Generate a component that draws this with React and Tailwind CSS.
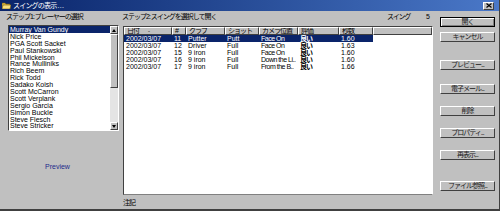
import React from "react";

const players = [
  "Murray Van Gundy",
  "Nick Price",
  "PGA Scott Sacket",
  "Paul Stankowski",
  "Phil Mickelson",
  "Rance Mulliniks",
  "Rich Beem",
  "Rick Todd",
  "Sadako Koish",
  "Scott McCarron",
  "Scott Verplank",
  "Sergio Garcia",
  "Simon Buckle",
  "Steve Flesch",
  "Steve Stricker",
];

const cols = [
  { label: "日付", w: "w-[48px]", sort: true },
  { label: "#", w: "w-[14px]" },
  { label: "クラブ", w: "w-[39px]" },
  { label: "ショット", w: "w-[34px]" },
  { label: "カメラ位置", w: "w-[39px]" },
  { label: "評価", w: "w-[41px]" },
  { label: "秒数", w: "w-[34px]" },
];

const rows = [
  ["2002/03/07", "11", "Putter", "Putt", "Face On", "良い", "1.60"],
  ["2002/03/07", "12", "Driver", "Full", "Face On", "良い", "1.63"],
  ["2002/03/07", "15", "9 iron", "Full", "Face On", "良い", "1.60"],
  ["2002/03/07", "16", "9 iron", "Full", "Down the Li..", "良い", "1.60"],
  ["2002/03/07", "17", "9 iron", "Full", "From the B..", "良い", "1.66"],
];

function Btn({ children, isDefault, className }) {
  return (
    <div
      className={
        "h-[10px] w-[55px] flex items-center justify-center bg-[#c0c0c0] text-[7px] leading-[8px] tracking-[-1px] text-[#1a1a1a] whitespace-nowrap " +
        (isDefault
          ? "border border-black shadow-[inset_1px_1px_0_#ffffff,inset_-1px_-1px_0_#808080] "
          : "border border-t-white border-l-white border-r-[#404040] border-b-[#404040] ") +
        (className || "")
      }
    >
      {children}
    </div>
  );
}

export default function App() {
  return (
    <div className="w-[500px] h-[211px] bg-[#c0c0c0] flex flex-col overflow-hidden border-r border-b-2 border-[#404040] font-['Liberation_Sans','Noto_Sans_CJK_JP',sans-serif] text-black">
      {/* Title bar */}
      <div className="h-[11px] shrink-0 flex items-center bg-linear-to-r from-[#0a246a] to-[#4a78c8] pl-[2px] pr-[5px]">
        <svg width="9" height="7" viewBox="0 0 9 7" className="shrink-0">
          <path d="M0 1 H3 L4 2 H8 V7 H0 Z" fill="#e8c040" stroke="#6a5010" strokeWidth="0.6" />
          <path d="M1 3 H9 L8 7 H0 Z" fill="#f8e080" stroke="#6a5010" strokeWidth="0.6" />
        </svg>
        <span className="ml-[2px] text-[7px] leading-[8px] text-white tracking-[-0.8px]">
          スイングの表示 . . .
        </span>
        <div className="ml-auto w-[11px] h-[8px] bg-[#c0c0c0] border border-t-white border-l-white border-r-[#404040] border-b-[#404040] flex items-center justify-center">
          <svg width="6" height="5" viewBox="0 0 6 5">
            <path d="M0.5 0.5 L5.5 4.5 M5.5 0.5 L0.5 4.5" stroke="#000" strokeWidth="1.2" />
          </svg>
        </div>
      </div>

      {/* Body */}
      <div className="flex flex-1 min-h-0">
        {/* Left column */}
        <div className="w-[119px] shrink-0 pl-[6px] pt-[2px] flex flex-col">
          <div className="h-[8px] leading-[8px] text-[7px] tracking-[-1px] whitespace-nowrap">
            ステップ1: プレーヤーの選択
          </div>
          <div className="mt-[4px] ml-[2px] w-[111px] h-[106px] bg-white border border-t-[#404040] border-l-[#404040] border-r-white border-b-white flex">
            <div className="flex-1 flex flex-col">
              {players.map((p, i) => (
                <div
                  key={p}
                  className={
                    "h-[6.9px] leading-[7px] text-[7px] pl-[1px] whitespace-nowrap " +
                    (i === 0 ? "bg-[#0a246a] text-white" : "")
                  }
                >
                  {p}
                </div>
              ))}
            </div>
            {/* Scrollbar */}
            <div className="w-[8px] shrink-0 flex flex-col bg-[#e4e4e4]">
              <div className="h-[8px] bg-[#c0c0c0] border border-t-white border-l-white border-r-[#404040] border-b-[#404040] flex items-center justify-center">
                <svg width="4" height="3" viewBox="0 0 4 3">
                  <path d="M2 0 L4 3 H0 Z" fill="#000" />
                </svg>
              </div>
              <div className="h-[54px] bg-[#c0c0c0] border border-t-white border-l-white border-r-[#404040] border-b-[#404040]" />
              <div className="flex-1" />
              <div className="h-[8px] bg-[#c0c0c0] border border-t-white border-l-white border-r-[#404040] border-b-[#404040] flex items-center justify-center">
                <svg width="4" height="3" viewBox="0 0 4 3">
                  <path d="M0 0 H4 L2 3 Z" fill="#000" />
                </svg>
              </div>
            </div>
          </div>
          <div className="mt-[32px] ml-[39px] h-[8px] leading-[8px] text-[7px] text-[#1c2a8c]">
            Preview
          </div>
        </div>

        {/* Middle column */}
        <div className="ml-[3px] w-[311px] shrink-0 pt-[2px] flex flex-col">
          <div className="h-[8px] leading-[8px] text-[7px] flex whitespace-nowrap">
            <span className="tracking-[-1px]">ステップ2: スイングを選択して開く</span>
            <span className="ml-auto tracking-[-1.2px]">スイング</span>
            <span className="ml-[16px] mr-[3px]">5</span>
          </div>
          <div className="mt-[5px] ml-[1px] w-[310px] h-[169px] bg-white border border-t-[#404040] border-l-[#404040] border-r-white border-b-[#808080] flex flex-col">
            {/* Header */}
            <div className="flex h-[8px] shrink-0">
              {cols.map((c) => (
                <div
                  key={c.label}
                  className={
                    c.w +
                    " h-[8px] shrink-0 bg-[#c0c0c0] border border-t-white border-l-white border-r-[#404040] border-b-[#404040] text-[7px] leading-[6px] pl-[2px] tracking-[-1px] whitespace-nowrap overflow-hidden flex items-center"
                  }
                >
                  {c.label}
                  {c.sort && <span className="ml-[9px] text-[6px]">-</span>}
                </div>
              ))}
              <div className="flex-1 h-[8px] bg-[#c0c0c0] border border-t-white border-l-white border-r-[#404040] border-b-[#404040]" />
            </div>
            {/* Rows */}
            {rows.map((r, ri) => (
              <div
                key={ri}
                className={
                  "flex h-[7px] w-[249px] shrink-0 " +
                  (ri === 0 ? "bg-[#0a246a] text-white" : "")
                }
              >
                {r.map((v, ci) => (
                  <div
                    key={ci}
                    className={
                      cols[ci].w +
                      " shrink-0 text-[7px] leading-[7px] pl-[2px] whitespace-nowrap overflow-hidden " +
                      (ci === 5 ? "tracking-[-1px] font-bold " : "") +
                      (ci === 4 ? "tracking-[-0.5px] text-[6.5px] pl-[1px]" : "")
                    }
                  >
                    {v}
                  </div>
                ))}
              </div>
            ))}
          </div>
          <div className="mt-[4px] ml-[1px] h-[8px] leading-[8px] text-[7px] tracking-[-1px]">注記</div>
        </div>

        {/* Right column */}
        <div className="ml-[7px] w-[55px] shrink-0 pt-[6px] flex flex-col">
          <Btn isDefault>開く</Btn>
          <Btn className="mt-[5px]">キャンセル</Btn>
          <Btn className="mt-[18px]">プレビュー...</Btn>
          <Btn className="mt-[14px]">電子メール...</Btn>
          <Btn className="mt-[12px]">削除</Btn>
          <Btn className="mt-[12px]">プロパティ...</Btn>
          <Btn className="mt-[12px]">再表示...</Btn>
          <Btn className="mt-[21px]">ファイル参照...</Btn>
        </div>
      </div>
    </div>
  );
}
